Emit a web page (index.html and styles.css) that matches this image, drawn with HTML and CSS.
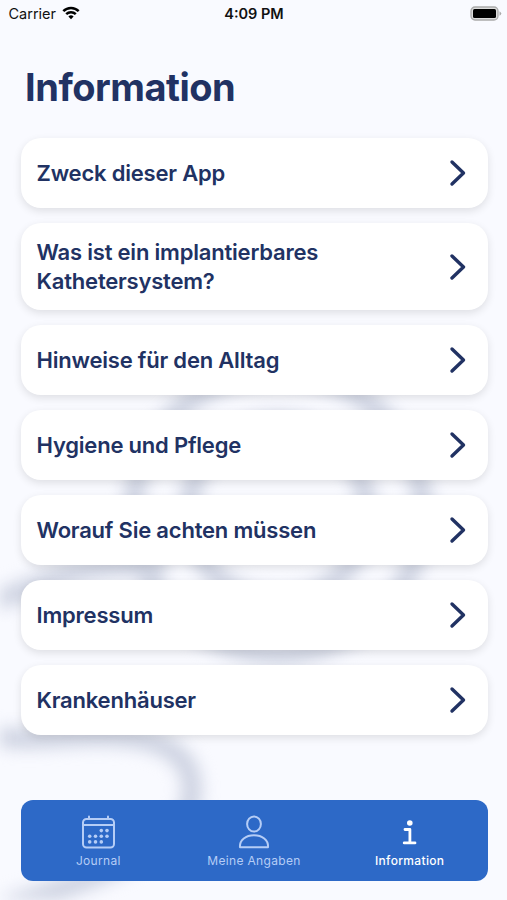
FILE: index.html
```html
<!DOCTYPE html>
<html lang="de">

	<head>
		<meta charset="UTF-8">
		<title>Information</title>
		<link rel="stylesheet" href="styles.css">
	</head>

	<body>
		<svg class="backdrop" viewBox="0 0 507 900">
			<ellipse cx="278" cy="513" rx="145" ry="141" />
			<circle cx="278" cy="512" r="89" />
			<path d="M-30 606 C20 598 40 578 90 569 S140 572 158 564" />
			<path d="M-30 732 C20 744 50 736 100 736 C165 736 192 755 192 790 C192 850 90 880 10 905" />
		</svg>

		<div class="app">
			<header class="status">
				<div class="carrier">
					<span>Carrier</span>
					<svg class="wifi" viewBox="0 0 18 14">
						<path d="M1.3 5.1 A11 11 0 0 1 16.7 5.1" />
						<path d="M4.2 8.2 A7 7 0 0 1 13.8 8.2" />
						<path class="dot" d="M6.4 10.5 A3.8 3.8 0 0 1 11.6 10.5 L9 13.3 Z" />
					</svg>
				</div>
				<span class="time">4:09 PM</span>
				<svg class="battery" viewBox="0 0 32 16">
					<rect class="case" x="1" y="1" width="27" height="13" rx="4" />
					<rect x="3" y="3" width="23" height="9" rx="1.5" />
					<path class="cap" d="M29.5 5.2 Q33 7.5 29.5 9.8 Z" />
				</svg>
			</header>

			<h1>Information</h1>

			<ul class="list">
				<li>
					<a href="#" class="card"><span>Zweck dieser App</span><svg class="chevron" viewBox="0 0 18 28"><path d="M3 3 L14.5 14 L3 25" /></svg></a>
				</li>
				<li>
					<a href="#" class="card"><span>Was ist ein implantierbares<br>Kathetersystem?</span><svg class="chevron" viewBox="0 0 18 28"><path d="M3 3 L14.5 14 L3 25" /></svg></a>
				</li>
				<li>
					<a href="#" class="card"><span>Hinweise für den Alltag</span><svg class="chevron" viewBox="0 0 18 28"><path d="M3 3 L14.5 14 L3 25" /></svg></a>
				</li>
				<li>
					<a href="#" class="card"><span>Hygiene und Pflege</span><svg class="chevron" viewBox="0 0 18 28"><path d="M3 3 L14.5 14 L3 25" /></svg></a>
				</li>
				<li>
					<a href="#" class="card"><span>Worauf Sie achten müssen</span><svg class="chevron" viewBox="0 0 18 28"><path d="M3 3 L14.5 14 L3 25" /></svg></a>
				</li>
				<li>
					<a href="#" class="card"><span>Impressum</span><svg class="chevron" viewBox="0 0 18 28"><path d="M3 3 L14.5 14 L3 25" /></svg></a>
				</li>
				<li>
					<a href="#" class="card"><span>Krankenhäuser</span><svg class="chevron" viewBox="0 0 18 28"><path d="M3 3 L14.5 14 L3 25" /></svg></a>
				</li>
			</ul>

			<nav class="tabs">
				<a href="#" class="tab">
					<svg viewBox="0 0 36 36">
						<rect x="3" y="5" width="31" height="28.5" rx="3.5" />
						<path d="M3 11 H34 M9 2.5 V5 M28 2.5 V5" />
						<g class="dots">
							<circle cx="21.3" cy="16.6" r="1.8" /><circle cx="27" cy="16.6" r="1.8" />
							<circle cx="9.7" cy="22.2" r="1.8" /><circle cx="15.5" cy="22.2" r="1.8" /><circle cx="21.3" cy="22.2" r="1.8" /><circle cx="27" cy="22.2" r="1.8" />
							<circle cx="9.7" cy="27.9" r="1.8" /><circle cx="15.5" cy="27.9" r="1.8" /><circle cx="21.3" cy="27.9" r="1.8" />
						</g>
					</svg>
					<span>Journal</span>
				</a>
				<a href="#" class="tab">
					<svg viewBox="0 0 36 36">
						<ellipse cx="18" cy="10" rx="6.9" ry="7.5" />
						<path d="M4 33.2 C3.4 26 10 21.3 18 21.3 S32.6 26 32 33.2 Z" />
					</svg>
					<span>Meine Angaben</span>
				</a>
				<a href="#" class="tab active">
					<svg viewBox="0 0 36 36">
						<circle class="point" cx="17.8" cy="9" r="2.8" />
						<path d="M13 15.5 H17.9 V28.5 M12.2 28.9 H23" />
					</svg>
					<span>Information</span>
				</a>
			</nav>
		</div>
	</body>

</html>
```

FILE: styles.css
```css
html,
body,
ul,
h1 {
	padding: 0;
	margin: 0;
}

body {
	background-color: #f9faff;
	color: #213263;
	font-family: Inter, "Liberation Sans", sans-serif;
	overflow: hidden;
}

a {
	color: inherit;
	text-decoration: none;
}

svg {
	display: block;
	fill: none;
	stroke-linecap: round;
	stroke-linejoin: round;
}

/* blurred tube behind the list */
.backdrop {
	position: absolute;
	left: 0;
	top: 0;
	width: 507px;
	height: 900px;
	stroke: #ced3e2;
	stroke-width: 20px;
	filter: blur(8px);
}

.app {
	position: relative;
	box-sizing: border-box;
	height: 900px;
	padding: 0 19.5px 19.5px 20.5px;
	display: flex;
	flex-direction: column;
}

.status {
	display: grid;
	grid-template-columns: 1fr auto 1fr;
	align-items: center;
	height: 27px;
	margin: 0 -12px;
	font-size: 14.5px;
	color: #111;
}

.carrier {
	display: flex;
	align-items: center;
	gap: 6px;
}

.wifi {
	width: 18px;
	height: 14px;
	margin-top: -1px;
	stroke: #000;
	stroke-width: 2.5px;
	stroke-linecap: butt;
}

.wifi .dot {
	fill: #000;
	stroke: none;
}

.time {
	font-weight: 600;
}

.battery {
	justify-self: end;
	width: 32px;
	height: 16px;
	margin-right: -2px;
	fill: #000;
}

.battery .case {
	fill: #ddd;
	stroke: #aaa;
	stroke-width: 1.3px;
}

.battery .cap {
	fill: #aaa;
}

h1 {
	margin: 36px 0 25.8px 4.6px;
	font-size: 38px;
	line-height: 49px;
	font-weight: 700;
	letter-spacing: -0.5px;
}

.list {
	list-style: none;
	display: flex;
	flex-direction: column;
	gap: 14.5px;
}

.card {
	box-sizing: border-box;
	min-height: 70.5px;
	padding: 15.4px 21px 15.4px 16px;
	display: flex;
	align-items: center;
	justify-content: space-between;
	background-color: #fff;
	border-radius: 20px;
	box-shadow: 0 3px 9px rgba(0, 0, 0, 0.11);
	font-size: 22px;
	line-height: 28.4px;
	font-weight: 600;
	letter-spacing: -0.2px;
}

.chevron {
	width: 18px;
	height: 28px;
	stroke: #213263;
	stroke-width: 3.4px;
}

.tabs {
	margin-top: auto;
	height: 81px;
	display: grid;
	grid-template-columns: repeat(3, 1fr);
	background-color: #2d69c7;
	border-radius: 12px;
}

.tab {
	display: flex;
	flex-direction: column;
	align-items: center;
	padding-top: 14px;
	color: #b5cdf6;
	font-size: 12px;
	line-height: 16px;
	letter-spacing: 0.33px;
}

.tab svg {
	width: 36px;
	height: 36px;
	margin-bottom: 3px;
	stroke: #b5cdf6;
	stroke-width: 2px;
}

.tab .dots {
	fill: #b5cdf6;
	stroke: none;
}

.tab.active {
	color: #fff;
	font-weight: 500;
}

.tab.active svg {
	stroke: #fff;
	stroke-width: 2.8px;
}

.tab .point {
	fill: #fff;
	stroke: none;
}
```
